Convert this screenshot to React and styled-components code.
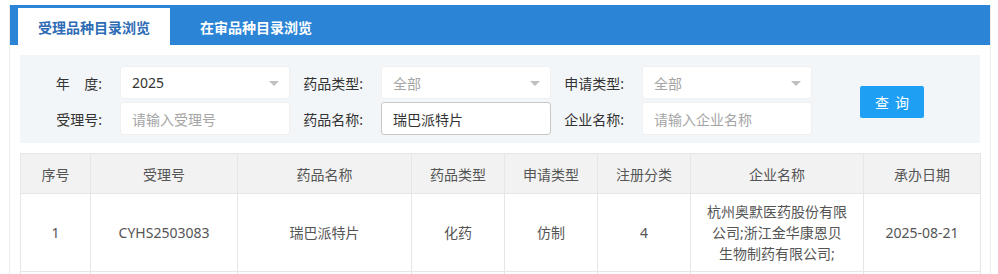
import React from 'react';
import styled, { createGlobalStyle } from 'styled-components';

const GlobalStyle = createGlobalStyle`
  body {
    margin: 0;
    background: #fff;
    font-family: "Noto Sans", "Noto Sans CJK SC", sans-serif;
    font-size: 14px;
    color: #555;
  }
`;

const Page = styled.div`
  padding: 5px 9px 0;
`;

const Box = styled.div`
  width: 980px;
  border-left: 1px solid #ececec;
  border-right: 1px solid #ececec;
`;

const TabBar = styled.div`
  display: flex;
  align-items: flex-end;
  gap: 10px;
  height: 40px;
  padding-left: 8px;
  background: #2b84d6;
`;

const Tab = styled.div`
  height: 37px;
  display: flex;
  align-items: center;
  padding: 0 20px;
  font-size: 14px;
  font-weight: 600;
  color: ${p => (p.$active ? '#2d6bb5' : '#fff')};
  background: ${p => (p.$active ? '#fff' : 'transparent')};
`;

const Content = styled.div`
  padding: 10px;
`;

const Filter = styled.div`
  display: flex;
  align-items: center;
  padding: 11px 9px 8px;
  background: #f3f6f8;
`;

const Fields = styled.div`
  display: grid;
  grid-template-columns: repeat(3, 261px);
  row-gap: 3px;
`;

const Field = styled.div`
  display: flex;
  align-items: center;
  gap: 18px;
`;

const Label = styled.label`
  width: 73px;
  text-align: right;
  color: #333;
  white-space: nowrap;
`;

const Input = styled.div`
  position: relative;
  box-sizing: border-box;
  width: 170px;
  height: 33px;
  display: flex;
  align-items: center;
  padding-left: 11px;
  background: #fff;
  border: 1px solid ${p => (p.$focus ? '#c8c8c8' : '#f0f0f0')};
  border-radius: 3px;
  color: ${p => (p.$placeholder ? '#a5a5a5' : '#333')};
`;

const Arrow = styled.span`
  position: absolute;
  right: 10px;
  top: 14px;
  width: 0;
  height: 0;
  border-left: 5px solid transparent;
  border-right: 5px solid transparent;
  border-top: 5px solid #c0c0c0;
`;

const Button = styled.button`
  margin-left: 48px;
  margin-top: 2px;
  width: 64px;
  height: 32px;
  border: none;
  border-radius: 2px;
  background: #1f9ff4;
  color: #fff;
  font-family: inherit;
  font-size: 14px;
  letter-spacing: 6px;
  text-indent: 6px;
`;

const Table = styled.table`
  margin-top: 10px;
  width: 960px;
  table-layout: fixed;
  border-collapse: collapse;
  border: 1px solid #e6e6e6;
`;

const Th = styled.th`
  height: 39px;
  padding: 0;
  background: #f2f2f2;
  border: 1px solid #e6e6e6;
  font-weight: normal;
  color: #555;
`;

const Td = styled.td`
  height: 77px;
  padding: 0 16px;
  border: 1px solid #e6e6e6;
  text-align: center;
  line-height: 21px;
  color: #555;
`;

const cols = [70, 147, 174, 93, 93, 93, 173, 117];
const heads = ['序号', '受理号', '药品名称', '药品类型', '申请类型', '注册分类', '企业名称', '承办日期'];
const rows = [
  ['1', 'CYHS2503083', '瑞巴派特片', '化药', '仿制', '4', '杭州奥默医药股份有限公司;浙江金华康恩贝生物制药有限公司;', '2025-08-21'],
  ['', '', '', '', '', '', '', ''],
];

export default function App() {
  return (
    <Page>
      <GlobalStyle />
      <Box>
        <TabBar>
          <Tab $active>受理品种目录浏览</Tab>
          <Tab>在审品种目录浏览</Tab>
        </TabBar>
        <Content>
          <Filter>
            <Fields>
              <Field>
                <Label>年&nbsp;&nbsp;&nbsp;&nbsp;度:</Label>
                <Input>2025<Arrow /></Input>
              </Field>
              <Field>
                <Label>药品类型:</Label>
                <Input $placeholder>全部<Arrow /></Input>
              </Field>
              <Field>
                <Label>申请类型:</Label>
                <Input $placeholder>全部<Arrow /></Input>
              </Field>
              <Field>
                <Label>受理号:</Label>
                <Input $placeholder>请输入受理号</Input>
              </Field>
              <Field>
                <Label>药品名称:</Label>
                <Input $focus>瑞巴派特片</Input>
              </Field>
              <Field>
                <Label>企业名称:</Label>
                <Input $placeholder>请输入企业名称</Input>
              </Field>
            </Fields>
            <Button>查询</Button>
          </Filter>
          <Table>
            <colgroup>
              {cols.map((w, i) => <col key={i} style={{ width: w }} />)}
            </colgroup>
            <thead>
              <tr>{heads.map(h => <Th key={h}>{h}</Th>)}</tr>
            </thead>
            <tbody>
              {rows.map((r, i) => (
                <tr key={i}>{r.map((c, j) => <Td key={j}>{c}</Td>)}</tr>
              ))}
            </tbody>
          </Table>
        </Content>
      </Box>
    </Page>
  );
}
